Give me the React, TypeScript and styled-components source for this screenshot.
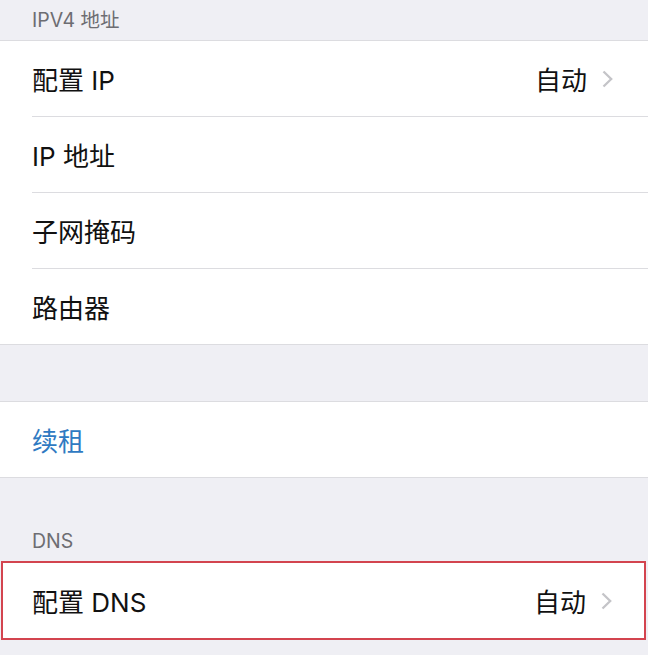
import styled, { createGlobalStyle } from 'styled-components';

const GlobalStyle = createGlobalStyle`
  html, body {
    margin: 0;
    padding: 0;
    background: #efeff4;
  }
  body {
    font-family: "Inter", "Noto Sans CJK SC", sans-serif;
    -webkit-font-smoothing: antialiased;
  }
`;

const Page = styled.div`
  width: 648px;
  height: 655px;
  overflow: hidden;
  background: #efeff4;
  display: flex;
  flex-direction: column;
`;

const SectionHeader = styled.div<{ height: number }>`
  height: ${({ height }) => height}px;
  display: flex;
  align-items: flex-end;
  padding: 0 0 8px 32px;
  box-sizing: border-box;
  font-size: 19.5px;
  line-height: 24px;
  color: #6d6d72;
`;

const Spacer = styled.div<{ height: number }>`
  height: ${({ height }) => height}px;
`;

const Group = styled.div`
  background: #fff;
  border-top: 1px solid #dcdce0;
  border-bottom: 1px solid #dcdce0;
`;

const Highlight = styled.div`
  margin: 0 2px 0 1px;
  border: 2px solid #d3444f;
  background: #fff;
`;

const Row = styled.div<{ inset?: number }>`
  height: 75px;
  display: flex;
  align-items: center;
  padding-left: ${({ inset = 0 }) => 32 - inset}px;
  padding-right: ${({ inset = 0 }) => 35 - inset}px;
  position: relative;

  &:not(:last-child)::after {
    content: '';
    position: absolute;
    left: 32px;
    right: 0;
    bottom: -1px;
    height: 1px;
    background: #dcdce0;
  }
  &:not(:last-child) {
    margin-bottom: 1px;
  }
`;

const Label = styled.span<{ accent?: boolean }>`
  flex: 1;
  font-size: 26px;
  color: ${({ accent }) => (accent ? '#2f7ac2' : '#111')};
`;

const Value = styled.span`
  font-size: 26px;
  color: #111;
  margin-right: 15px;
`;

const Chevron = styled.svg`
  width: 11px;
  height: 18px;
`;

const Arrow = () => (
  <Chevron viewBox="0 0 11 18">
    <path d="M1.5 1.5 L9.2 9 L1.5 16.5" fill="none" stroke="#c4c4c8" strokeWidth="2.3" />
  </Chevron>
);

export default function App() {
  return (
    <Page>
      <GlobalStyle />
      <SectionHeader height={40}>IPV4 地址</SectionHeader>
      <Group>
        <Row>
          <Label>配置 IP</Label>
          <Value>自动</Value>
          <Arrow />
        </Row>
        <Row>
          <Label>IP 地址</Label>
        </Row>
        <Row>
          <Label>子网掩码</Label>
        </Row>
        <Row>
          <Label>路由器</Label>
        </Row>
      </Group>
      <Spacer height={56} />
      <Group>
        <Row>
          <Label accent>续租</Label>
        </Row>
      </Group>
      <SectionHeader height={83}>DNS</SectionHeader>
      <Highlight>
        <Row inset={3}>
          <Label>配置 DNS</Label>
          <Value>自动</Value>
          <Arrow />
        </Row>
      </Highlight>
    </Page>
  );
}
